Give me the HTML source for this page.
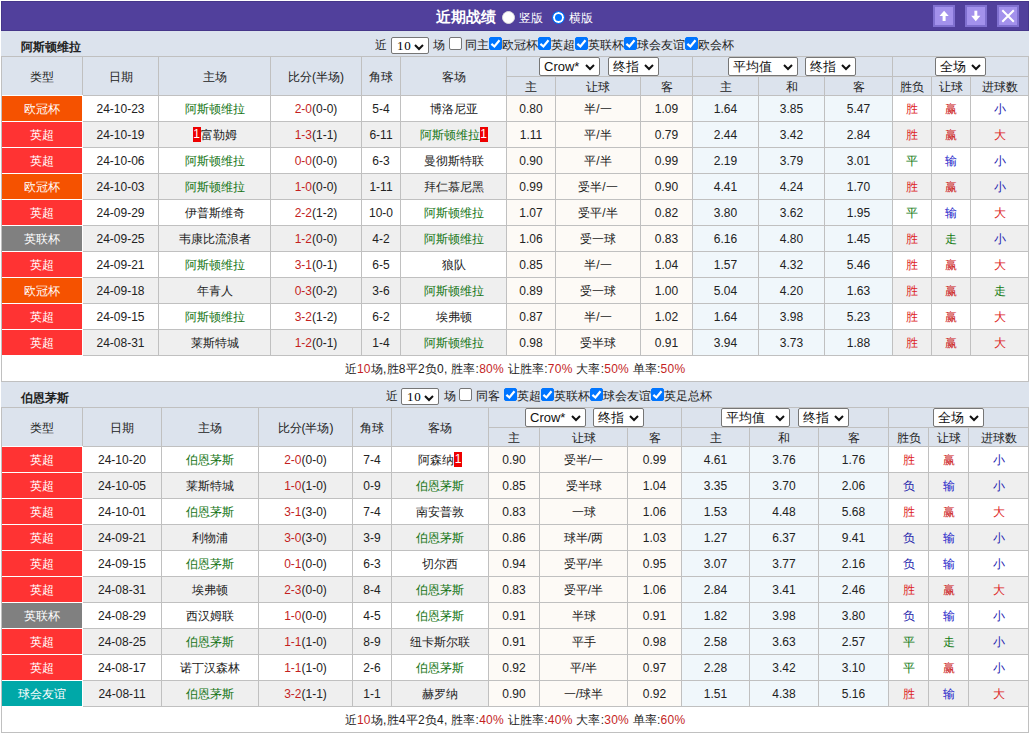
<!DOCTYPE html><html><head><meta charset="utf-8"><style>
html,body{margin:0;padding:0;background:#fff;}
body{width:1032px;height:734px;overflow:hidden;position:relative;font-family:"Liberation Sans",sans-serif;font-size:12px;color:#222;}
body div{position:absolute;box-sizing:border-box;white-space:nowrap;}
.title{font-weight:bold;font-size:12px;color:#222;}
.t{font-size:12px;line-height:18px;color:#222;}
.bt{font-size:15px;font-weight:bold;color:#fff;line-height:17px;}
.rc{display:inline-block;background:#e00;color:#fff;width:8px;height:15px;line-height:15px;text-align:center;vertical-align:middle;font-size:12px;position:relative;top:-1px;}
.sel{background:#fff;border:1px solid #767676;border-radius:2px;box-sizing:content-box !important;}
.sel .st{position:absolute;left:4px;top:0;font-size:13px;color:#111;}
.sel .st.mono{font-family:'Liberation Serif',serif;font-size:13px;letter-spacing:0.8px;left:5px;top:0px;color:#000;}
.sel .chev{position:absolute;right:4px;top:6px;}
.sel.m .chev{right:4px;}
.cb{width:13px;height:13px;border:1px solid #767676;border-radius:2px;background:#fff;}
.cb.on{background:#0075ff;border-color:#0075ff;}
.cb svg{position:absolute;left:-1px;top:-1px;}
.radio{width:13px;height:13px;border-radius:50%;background:#fff;border:1px solid #ddd;}
.radio.on{background:#0075ff;border:1px solid #0075ff;box-shadow:inset 0 0 0 2px #fff;}
.btn{width:22px;height:22px;background:#a391ec;border:2px solid #8070d0;}
</style></head><body><div style="left:1px;top:1px;width:1028px;height:30px;background:#51409c;box-sizing:border-box;border:1px solid #46378a"></div><div class="bt" style="left:436px;top:8px">近期战绩</div><div class="radio" style="left:502px;top:11px"></div><div class="t" style="left:519px;top:9px;color:#fff">竖版</div><div class="radio on" style="left:552px;top:11px"></div><div class="t" style="left:569px;top:9px;color:#fff">横版</div><div class="btn" style="left:933px;top:5px"><svg width="18" height="18" viewBox="0 0 18 18" style="position:absolute;left:0;top:0"><path d="M4.5 9 L9.1 3.8 L13.7 9 Z" fill="#fff"/><rect x="7.6" y="8.5" width="3" height="5.5" fill="#fff"/></svg></div><div class="btn" style="left:965px;top:5px"><svg width="18" height="18" viewBox="0 0 18 18" style="position:absolute;left:0;top:0"><path d="M4.2 8.7 L8.8 14.2 L13.4 8.7 Z" fill="#fff"/><rect x="7.4" y="3.7" width="2.9" height="5.5" fill="#fff"/></svg></div><div class="btn" style="left:997px;top:5px"><svg width="18" height="18" viewBox="0 0 18 18" style="position:absolute;left:0;top:0"><path d="M3.3 3.3 L14.8 14.8 M14.8 3.3 L3.3 14.8" stroke="#fff" stroke-width="2"/></svg></div><div style="left:1px;top:31px;width:1028px;height:25px;background:#dce3ed"></div><div class="title" style="left:21px;top:35px;height:25px;line-height:25px">阿斯顿维拉</div><div style="left:1px;top:56px;width:1028px;height:326px;background:#c0c0c0"></div><div style="left:2px;top:57px;width:80px;height:38px;background:#dce3ed;line-height:40px;text-align:center;">类型</div><div style="left:83px;top:57px;width:75px;height:38px;background:#dce3ed;line-height:40px;text-align:center;">日期</div><div style="left:159px;top:57px;width:111px;height:38px;background:#dce3ed;line-height:40px;text-align:center;">主场</div><div style="left:271px;top:57px;width:90px;height:38px;background:#dce3ed;line-height:40px;text-align:center;">比分(半场)</div><div style="left:362px;top:57px;width:38px;height:38px;background:#dce3ed;line-height:40px;text-align:center;">角球</div><div style="left:401px;top:57px;width:105px;height:38px;background:#dce3ed;line-height:40px;text-align:center;">客场</div><div style="left:507px;top:57px;width:185px;height:19px;background:#dce3ed;line-height:21px;"></div><div style="left:693px;top:57px;width:199px;height:19px;background:#dce3ed;line-height:21px;"></div><div style="left:893px;top:57px;width:135px;height:19px;background:#dce3ed;line-height:21px;"></div><div style="left:507px;top:77px;width:48px;height:18px;background:#dce3ed;line-height:20px;text-align:center;">主</div><div style="left:556px;top:77px;width:84px;height:18px;background:#dce3ed;line-height:20px;text-align:center;">让球</div><div style="left:641px;top:77px;width:51px;height:18px;background:#dce3ed;line-height:20px;text-align:center;">客</div><div style="left:693px;top:77px;width:65px;height:18px;background:#dce3ed;line-height:20px;text-align:center;">主</div><div style="left:759px;top:77px;width:65px;height:18px;background:#dce3ed;line-height:20px;text-align:center;">和</div><div style="left:825px;top:77px;width:67px;height:18px;background:#dce3ed;line-height:20px;text-align:center;">客</div><div style="left:893px;top:77px;width:38px;height:18px;background:#dce3ed;line-height:20px;text-align:center;">胜负</div><div style="left:932px;top:77px;width:38px;height:18px;background:#dce3ed;line-height:20px;text-align:center;">让球</div><div style="left:971px;top:77px;width:57px;height:18px;background:#dce3ed;line-height:20px;text-align:center;">进球数</div><div style="left:2px;top:95px;width:81px;height:261px;background:#fff"></div><div style="left:2px;top:96px;width:80px;height:25px;background:#f55200;line-height:27px;text-align:center;color:#fff;">欧冠杯</div><div style="left:83px;top:96px;width:75px;height:25px;background:#fff;line-height:27px;text-align:center;">24-10-23</div><div style="left:159px;top:96px;width:111px;height:25px;background:#fff;line-height:27px;text-align:center;"><span style="color:#157515">阿斯顿维拉</span></div><div style="left:271px;top:96px;width:90px;height:25px;background:#fff;line-height:27px;text-align:center;"><span style="color:#c41f1f">2-0</span>(0-0)</div><div style="left:362px;top:96px;width:38px;height:25px;background:#fff;line-height:27px;text-align:center;">5-4</div><div style="left:401px;top:96px;width:105px;height:25px;background:#fff;line-height:27px;text-align:center;"><span style="color:#222">博洛尼亚</span></div><div style="left:507px;top:96px;width:48px;height:25px;background:#fdfaf6;line-height:27px;text-align:center;">0.80</div><div style="left:556px;top:96px;width:84px;height:25px;background:#fdfaf6;line-height:27px;text-align:center;">半/一</div><div style="left:641px;top:96px;width:51px;height:25px;background:#fdfaf6;line-height:27px;text-align:center;">1.09</div><div style="left:693px;top:96px;width:65px;height:25px;background:#f0f7fb;line-height:27px;text-align:center;">1.64</div><div style="left:759px;top:96px;width:65px;height:25px;background:#f0f7fb;line-height:27px;text-align:center;">3.85</div><div style="left:825px;top:96px;width:67px;height:25px;background:#f0f7fb;line-height:27px;text-align:center;">5.47</div><div style="left:893px;top:96px;width:38px;height:25px;background:#fff;line-height:27px;text-align:center;"><span style="color:#dd2222">胜</span></div><div style="left:932px;top:96px;width:38px;height:25px;background:#fff;line-height:27px;text-align:center;"><span style="color:#cc2222">赢</span></div><div style="left:971px;top:96px;width:57px;height:25px;background:#fff;line-height:27px;text-align:center;"><span style="color:#2323b0">小</span></div><div style="left:2px;top:122px;width:80px;height:25px;background:#ff3333;line-height:27px;text-align:center;color:#fff;">英超</div><div style="left:83px;top:122px;width:75px;height:25px;background:#efefef;line-height:27px;text-align:center;">24-10-19</div><div style="left:159px;top:122px;width:111px;height:25px;background:#efefef;line-height:27px;text-align:center;"><span style="color:#222"><span class="rc">1</span>富勒姆</span></div><div style="left:271px;top:122px;width:90px;height:25px;background:#efefef;line-height:27px;text-align:center;"><span style="color:#c41f1f">1-3</span>(1-1)</div><div style="left:362px;top:122px;width:38px;height:25px;background:#efefef;line-height:27px;text-align:center;">6-11</div><div style="left:401px;top:122px;width:105px;height:25px;background:#efefef;line-height:27px;text-align:center;"><span style="color:#157515">阿斯顿维拉<span class="rc">1</span></span></div><div style="left:507px;top:122px;width:48px;height:25px;background:#fdfaf6;line-height:27px;text-align:center;">1.11</div><div style="left:556px;top:122px;width:84px;height:25px;background:#fdfaf6;line-height:27px;text-align:center;">平/半</div><div style="left:641px;top:122px;width:51px;height:25px;background:#fdfaf6;line-height:27px;text-align:center;">0.79</div><div style="left:693px;top:122px;width:65px;height:25px;background:#f0f7fb;line-height:27px;text-align:center;">2.44</div><div style="left:759px;top:122px;width:65px;height:25px;background:#f0f7fb;line-height:27px;text-align:center;">3.42</div><div style="left:825px;top:122px;width:67px;height:25px;background:#f0f7fb;line-height:27px;text-align:center;">2.84</div><div style="left:893px;top:122px;width:38px;height:25px;background:#efefef;line-height:27px;text-align:center;"><span style="color:#dd2222">胜</span></div><div style="left:932px;top:122px;width:38px;height:25px;background:#efefef;line-height:27px;text-align:center;"><span style="color:#cc2222">赢</span></div><div style="left:971px;top:122px;width:57px;height:25px;background:#efefef;line-height:27px;text-align:center;"><span style="color:#dd2222">大</span></div><div style="left:2px;top:148px;width:80px;height:25px;background:#ff3333;line-height:27px;text-align:center;color:#fff;">英超</div><div style="left:83px;top:148px;width:75px;height:25px;background:#fff;line-height:27px;text-align:center;">24-10-06</div><div style="left:159px;top:148px;width:111px;height:25px;background:#fff;line-height:27px;text-align:center;"><span style="color:#157515">阿斯顿维拉</span></div><div style="left:271px;top:148px;width:90px;height:25px;background:#fff;line-height:27px;text-align:center;"><span style="color:#c41f1f">0-0</span>(0-0)</div><div style="left:362px;top:148px;width:38px;height:25px;background:#fff;line-height:27px;text-align:center;">6-3</div><div style="left:401px;top:148px;width:105px;height:25px;background:#fff;line-height:27px;text-align:center;"><span style="color:#222">曼彻斯特联</span></div><div style="left:507px;top:148px;width:48px;height:25px;background:#fdfaf6;line-height:27px;text-align:center;">0.90</div><div style="left:556px;top:148px;width:84px;height:25px;background:#fdfaf6;line-height:27px;text-align:center;">平/半</div><div style="left:641px;top:148px;width:51px;height:25px;background:#fdfaf6;line-height:27px;text-align:center;">0.99</div><div style="left:693px;top:148px;width:65px;height:25px;background:#f0f7fb;line-height:27px;text-align:center;">2.19</div><div style="left:759px;top:148px;width:65px;height:25px;background:#f0f7fb;line-height:27px;text-align:center;">3.79</div><div style="left:825px;top:148px;width:67px;height:25px;background:#f0f7fb;line-height:27px;text-align:center;">3.01</div><div style="left:893px;top:148px;width:38px;height:25px;background:#fff;line-height:27px;text-align:center;"><span style="color:#117a11">平</span></div><div style="left:932px;top:148px;width:38px;height:25px;background:#fff;line-height:27px;text-align:center;"><span style="color:#1a1ac8">输</span></div><div style="left:971px;top:148px;width:57px;height:25px;background:#fff;line-height:27px;text-align:center;"><span style="color:#2323b0">小</span></div><div style="left:2px;top:174px;width:80px;height:25px;background:#f55200;line-height:27px;text-align:center;color:#fff;">欧冠杯</div><div style="left:83px;top:174px;width:75px;height:25px;background:#efefef;line-height:27px;text-align:center;">24-10-03</div><div style="left:159px;top:174px;width:111px;height:25px;background:#efefef;line-height:27px;text-align:center;"><span style="color:#157515">阿斯顿维拉</span></div><div style="left:271px;top:174px;width:90px;height:25px;background:#efefef;line-height:27px;text-align:center;"><span style="color:#c41f1f">1-0</span>(0-0)</div><div style="left:362px;top:174px;width:38px;height:25px;background:#efefef;line-height:27px;text-align:center;">1-11</div><div style="left:401px;top:174px;width:105px;height:25px;background:#efefef;line-height:27px;text-align:center;"><span style="color:#222">拜仁慕尼黑</span></div><div style="left:507px;top:174px;width:48px;height:25px;background:#fdfaf6;line-height:27px;text-align:center;">0.99</div><div style="left:556px;top:174px;width:84px;height:25px;background:#fdfaf6;line-height:27px;text-align:center;">受半/一</div><div style="left:641px;top:174px;width:51px;height:25px;background:#fdfaf6;line-height:27px;text-align:center;">0.90</div><div style="left:693px;top:174px;width:65px;height:25px;background:#f0f7fb;line-height:27px;text-align:center;">4.41</div><div style="left:759px;top:174px;width:65px;height:25px;background:#f0f7fb;line-height:27px;text-align:center;">4.24</div><div style="left:825px;top:174px;width:67px;height:25px;background:#f0f7fb;line-height:27px;text-align:center;">1.70</div><div style="left:893px;top:174px;width:38px;height:25px;background:#efefef;line-height:27px;text-align:center;"><span style="color:#dd2222">胜</span></div><div style="left:932px;top:174px;width:38px;height:25px;background:#efefef;line-height:27px;text-align:center;"><span style="color:#cc2222">赢</span></div><div style="left:971px;top:174px;width:57px;height:25px;background:#efefef;line-height:27px;text-align:center;"><span style="color:#2323b0">小</span></div><div style="left:2px;top:200px;width:80px;height:25px;background:#ff3333;line-height:27px;text-align:center;color:#fff;">英超</div><div style="left:83px;top:200px;width:75px;height:25px;background:#fff;line-height:27px;text-align:center;">24-09-29</div><div style="left:159px;top:200px;width:111px;height:25px;background:#fff;line-height:27px;text-align:center;"><span style="color:#222">伊普斯维奇</span></div><div style="left:271px;top:200px;width:90px;height:25px;background:#fff;line-height:27px;text-align:center;"><span style="color:#c41f1f">2-2</span>(1-2)</div><div style="left:362px;top:200px;width:38px;height:25px;background:#fff;line-height:27px;text-align:center;">10-0</div><div style="left:401px;top:200px;width:105px;height:25px;background:#fff;line-height:27px;text-align:center;"><span style="color:#157515">阿斯顿维拉</span></div><div style="left:507px;top:200px;width:48px;height:25px;background:#fdfaf6;line-height:27px;text-align:center;">1.07</div><div style="left:556px;top:200px;width:84px;height:25px;background:#fdfaf6;line-height:27px;text-align:center;">受平/半</div><div style="left:641px;top:200px;width:51px;height:25px;background:#fdfaf6;line-height:27px;text-align:center;">0.82</div><div style="left:693px;top:200px;width:65px;height:25px;background:#f0f7fb;line-height:27px;text-align:center;">3.80</div><div style="left:759px;top:200px;width:65px;height:25px;background:#f0f7fb;line-height:27px;text-align:center;">3.62</div><div style="left:825px;top:200px;width:67px;height:25px;background:#f0f7fb;line-height:27px;text-align:center;">1.95</div><div style="left:893px;top:200px;width:38px;height:25px;background:#fff;line-height:27px;text-align:center;"><span style="color:#117a11">平</span></div><div style="left:932px;top:200px;width:38px;height:25px;background:#fff;line-height:27px;text-align:center;"><span style="color:#1a1ac8">输</span></div><div style="left:971px;top:200px;width:57px;height:25px;background:#fff;line-height:27px;text-align:center;"><span style="color:#dd2222">大</span></div><div style="left:2px;top:226px;width:80px;height:25px;background:#808080;line-height:27px;text-align:center;color:#fff;">英联杯</div><div style="left:83px;top:226px;width:75px;height:25px;background:#efefef;line-height:27px;text-align:center;">24-09-25</div><div style="left:159px;top:226px;width:111px;height:25px;background:#efefef;line-height:27px;text-align:center;"><span style="color:#222">韦康比流浪者</span></div><div style="left:271px;top:226px;width:90px;height:25px;background:#efefef;line-height:27px;text-align:center;"><span style="color:#c41f1f">1-2</span>(0-0)</div><div style="left:362px;top:226px;width:38px;height:25px;background:#efefef;line-height:27px;text-align:center;">4-2</div><div style="left:401px;top:226px;width:105px;height:25px;background:#efefef;line-height:27px;text-align:center;"><span style="color:#157515">阿斯顿维拉</span></div><div style="left:507px;top:226px;width:48px;height:25px;background:#fdfaf6;line-height:27px;text-align:center;">1.06</div><div style="left:556px;top:226px;width:84px;height:25px;background:#fdfaf6;line-height:27px;text-align:center;">受一球</div><div style="left:641px;top:226px;width:51px;height:25px;background:#fdfaf6;line-height:27px;text-align:center;">0.83</div><div style="left:693px;top:226px;width:65px;height:25px;background:#f0f7fb;line-height:27px;text-align:center;">6.16</div><div style="left:759px;top:226px;width:65px;height:25px;background:#f0f7fb;line-height:27px;text-align:center;">4.80</div><div style="left:825px;top:226px;width:67px;height:25px;background:#f0f7fb;line-height:27px;text-align:center;">1.45</div><div style="left:893px;top:226px;width:38px;height:25px;background:#efefef;line-height:27px;text-align:center;"><span style="color:#dd2222">胜</span></div><div style="left:932px;top:226px;width:38px;height:25px;background:#efefef;line-height:27px;text-align:center;"><span style="color:#117a11">走</span></div><div style="left:971px;top:226px;width:57px;height:25px;background:#efefef;line-height:27px;text-align:center;"><span style="color:#2323b0">小</span></div><div style="left:2px;top:252px;width:80px;height:25px;background:#ff3333;line-height:27px;text-align:center;color:#fff;">英超</div><div style="left:83px;top:252px;width:75px;height:25px;background:#fff;line-height:27px;text-align:center;">24-09-21</div><div style="left:159px;top:252px;width:111px;height:25px;background:#fff;line-height:27px;text-align:center;"><span style="color:#157515">阿斯顿维拉</span></div><div style="left:271px;top:252px;width:90px;height:25px;background:#fff;line-height:27px;text-align:center;"><span style="color:#c41f1f">3-1</span>(0-1)</div><div style="left:362px;top:252px;width:38px;height:25px;background:#fff;line-height:27px;text-align:center;">6-5</div><div style="left:401px;top:252px;width:105px;height:25px;background:#fff;line-height:27px;text-align:center;"><span style="color:#222">狼队</span></div><div style="left:507px;top:252px;width:48px;height:25px;background:#fdfaf6;line-height:27px;text-align:center;">0.85</div><div style="left:556px;top:252px;width:84px;height:25px;background:#fdfaf6;line-height:27px;text-align:center;">半/一</div><div style="left:641px;top:252px;width:51px;height:25px;background:#fdfaf6;line-height:27px;text-align:center;">1.04</div><div style="left:693px;top:252px;width:65px;height:25px;background:#f0f7fb;line-height:27px;text-align:center;">1.57</div><div style="left:759px;top:252px;width:65px;height:25px;background:#f0f7fb;line-height:27px;text-align:center;">4.32</div><div style="left:825px;top:252px;width:67px;height:25px;background:#f0f7fb;line-height:27px;text-align:center;">5.46</div><div style="left:893px;top:252px;width:38px;height:25px;background:#fff;line-height:27px;text-align:center;"><span style="color:#dd2222">胜</span></div><div style="left:932px;top:252px;width:38px;height:25px;background:#fff;line-height:27px;text-align:center;"><span style="color:#cc2222">赢</span></div><div style="left:971px;top:252px;width:57px;height:25px;background:#fff;line-height:27px;text-align:center;"><span style="color:#dd2222">大</span></div><div style="left:2px;top:278px;width:80px;height:25px;background:#f55200;line-height:27px;text-align:center;color:#fff;">欧冠杯</div><div style="left:83px;top:278px;width:75px;height:25px;background:#efefef;line-height:27px;text-align:center;">24-09-18</div><div style="left:159px;top:278px;width:111px;height:25px;background:#efefef;line-height:27px;text-align:center;"><span style="color:#222">年青人</span></div><div style="left:271px;top:278px;width:90px;height:25px;background:#efefef;line-height:27px;text-align:center;"><span style="color:#c41f1f">0-3</span>(0-2)</div><div style="left:362px;top:278px;width:38px;height:25px;background:#efefef;line-height:27px;text-align:center;">3-6</div><div style="left:401px;top:278px;width:105px;height:25px;background:#efefef;line-height:27px;text-align:center;"><span style="color:#157515">阿斯顿维拉</span></div><div style="left:507px;top:278px;width:48px;height:25px;background:#fdfaf6;line-height:27px;text-align:center;">0.89</div><div style="left:556px;top:278px;width:84px;height:25px;background:#fdfaf6;line-height:27px;text-align:center;">受一球</div><div style="left:641px;top:278px;width:51px;height:25px;background:#fdfaf6;line-height:27px;text-align:center;">1.00</div><div style="left:693px;top:278px;width:65px;height:25px;background:#f0f7fb;line-height:27px;text-align:center;">5.04</div><div style="left:759px;top:278px;width:65px;height:25px;background:#f0f7fb;line-height:27px;text-align:center;">4.20</div><div style="left:825px;top:278px;width:67px;height:25px;background:#f0f7fb;line-height:27px;text-align:center;">1.63</div><div style="left:893px;top:278px;width:38px;height:25px;background:#efefef;line-height:27px;text-align:center;"><span style="color:#dd2222">胜</span></div><div style="left:932px;top:278px;width:38px;height:25px;background:#efefef;line-height:27px;text-align:center;"><span style="color:#cc2222">赢</span></div><div style="left:971px;top:278px;width:57px;height:25px;background:#efefef;line-height:27px;text-align:center;"><span style="color:#117a11">走</span></div><div style="left:2px;top:304px;width:80px;height:25px;background:#ff3333;line-height:27px;text-align:center;color:#fff;">英超</div><div style="left:83px;top:304px;width:75px;height:25px;background:#fff;line-height:27px;text-align:center;">24-09-15</div><div style="left:159px;top:304px;width:111px;height:25px;background:#fff;line-height:27px;text-align:center;"><span style="color:#157515">阿斯顿维拉</span></div><div style="left:271px;top:304px;width:90px;height:25px;background:#fff;line-height:27px;text-align:center;"><span style="color:#c41f1f">3-2</span>(1-2)</div><div style="left:362px;top:304px;width:38px;height:25px;background:#fff;line-height:27px;text-align:center;">6-2</div><div style="left:401px;top:304px;width:105px;height:25px;background:#fff;line-height:27px;text-align:center;"><span style="color:#222">埃弗顿</span></div><div style="left:507px;top:304px;width:48px;height:25px;background:#fdfaf6;line-height:27px;text-align:center;">0.87</div><div style="left:556px;top:304px;width:84px;height:25px;background:#fdfaf6;line-height:27px;text-align:center;">半/一</div><div style="left:641px;top:304px;width:51px;height:25px;background:#fdfaf6;line-height:27px;text-align:center;">1.02</div><div style="left:693px;top:304px;width:65px;height:25px;background:#f0f7fb;line-height:27px;text-align:center;">1.64</div><div style="left:759px;top:304px;width:65px;height:25px;background:#f0f7fb;line-height:27px;text-align:center;">3.98</div><div style="left:825px;top:304px;width:67px;height:25px;background:#f0f7fb;line-height:27px;text-align:center;">5.23</div><div style="left:893px;top:304px;width:38px;height:25px;background:#fff;line-height:27px;text-align:center;"><span style="color:#dd2222">胜</span></div><div style="left:932px;top:304px;width:38px;height:25px;background:#fff;line-height:27px;text-align:center;"><span style="color:#cc2222">赢</span></div><div style="left:971px;top:304px;width:57px;height:25px;background:#fff;line-height:27px;text-align:center;"><span style="color:#dd2222">大</span></div><div style="left:2px;top:330px;width:80px;height:25px;background:#ff3333;line-height:27px;text-align:center;color:#fff;">英超</div><div style="left:83px;top:330px;width:75px;height:25px;background:#efefef;line-height:27px;text-align:center;">24-08-31</div><div style="left:159px;top:330px;width:111px;height:25px;background:#efefef;line-height:27px;text-align:center;"><span style="color:#222">莱斯特城</span></div><div style="left:271px;top:330px;width:90px;height:25px;background:#efefef;line-height:27px;text-align:center;"><span style="color:#c41f1f">1-2</span>(0-1)</div><div style="left:362px;top:330px;width:38px;height:25px;background:#efefef;line-height:27px;text-align:center;">1-4</div><div style="left:401px;top:330px;width:105px;height:25px;background:#efefef;line-height:27px;text-align:center;"><span style="color:#157515">阿斯顿维拉</span></div><div style="left:507px;top:330px;width:48px;height:25px;background:#fdfaf6;line-height:27px;text-align:center;">0.98</div><div style="left:556px;top:330px;width:84px;height:25px;background:#fdfaf6;line-height:27px;text-align:center;">受半球</div><div style="left:641px;top:330px;width:51px;height:25px;background:#fdfaf6;line-height:27px;text-align:center;">0.91</div><div style="left:693px;top:330px;width:65px;height:25px;background:#f0f7fb;line-height:27px;text-align:center;">3.94</div><div style="left:759px;top:330px;width:65px;height:25px;background:#f0f7fb;line-height:27px;text-align:center;">3.73</div><div style="left:825px;top:330px;width:67px;height:25px;background:#f0f7fb;line-height:27px;text-align:center;">1.88</div><div style="left:893px;top:330px;width:38px;height:25px;background:#efefef;line-height:27px;text-align:center;"><span style="color:#dd2222">胜</span></div><div style="left:932px;top:330px;width:38px;height:25px;background:#efefef;line-height:27px;text-align:center;"><span style="color:#cc2222">赢</span></div><div style="left:971px;top:330px;width:57px;height:25px;background:#efefef;line-height:27px;text-align:center;"><span style="color:#dd2222">大</span></div><div style="left:2px;top:356px;width:1026px;height:25px;background:#fff;line-height:27px;text-align:center;letter-spacing:0.24px;">近<span style="color:#c41f1f">10</span>场,胜8平2负0, 胜率:<span style="color:#c41f1f">80%</span> 让胜率:<span style="color:#c41f1f">70%</span> 大率:<span style="color:#c41f1f">50%</span> 单率:<span style="color:#c41f1f">50%</span></div><div class="t" style="left:375px;top:36px;">近</div><div class="sel m" style="left:391px;top:37px;width:36px;height:15px;line-height:15px"><span class="st mono">10</span><svg class="chev" width="10" height="7" viewBox="0 0 10 7"><path d="M1 1 L5 5 L9 1" fill="none" stroke="#111" stroke-width="2"/></svg></div><div class="t" style="left:433px;top:36px;">场</div><div class="cb" style="left:449px;top:37px"></div><div class="t" style="left:465px;top:36px;">同主</div><div class="cb on" style="left:489px;top:37px"><svg width="13" height="13" viewBox="0 0 13 13"><path d="M2.4 6.9 L5.4 9.5 L10.5 3.2" fill="none" stroke="#fff" stroke-width="2.2"/></svg></div><div class="t" style="left:502px;top:36px;">欧冠杯</div><div class="cb on" style="left:538px;top:37px"><svg width="13" height="13" viewBox="0 0 13 13"><path d="M2.4 6.9 L5.4 9.5 L10.5 3.2" fill="none" stroke="#fff" stroke-width="2.2"/></svg></div><div class="t" style="left:551px;top:36px;">英超</div><div class="cb on" style="left:575px;top:37px"><svg width="13" height="13" viewBox="0 0 13 13"><path d="M2.4 6.9 L5.4 9.5 L10.5 3.2" fill="none" stroke="#fff" stroke-width="2.2"/></svg></div><div class="t" style="left:588px;top:36px;">英联杯</div><div class="cb on" style="left:624px;top:37px"><svg width="13" height="13" viewBox="0 0 13 13"><path d="M2.4 6.9 L5.4 9.5 L10.5 3.2" fill="none" stroke="#fff" stroke-width="2.2"/></svg></div><div class="t" style="left:637px;top:36px;">球会友谊</div><div class="cb on" style="left:685px;top:37px"><svg width="13" height="13" viewBox="0 0 13 13"><path d="M2.4 6.9 L5.4 9.5 L10.5 3.2" fill="none" stroke="#fff" stroke-width="2.2"/></svg></div><div class="t" style="left:698px;top:36px;">欧会杯</div><div class="sel" style="left:539px;top:57px;width:59px;height:17px;line-height:17px"><span class="st">Crow*</span><svg class="chev" width="10" height="7" viewBox="0 0 10 7"><path d="M1 1 L5 5 L9 1" fill="none" stroke="#111" stroke-width="2"/></svg></div><div class="sel" style="left:608px;top:57px;width:49px;height:17px;line-height:17px"><span class="st">终指</span><svg class="chev" width="10" height="7" viewBox="0 0 10 7"><path d="M1 1 L5 5 L9 1" fill="none" stroke="#111" stroke-width="2"/></svg></div><div class="sel" style="left:728px;top:57px;width:68px;height:17px;line-height:17px"><span class="st">平均值</span><svg class="chev" width="10" height="7" viewBox="0 0 10 7"><path d="M1 1 L5 5 L9 1" fill="none" stroke="#111" stroke-width="2"/></svg></div><div class="sel" style="left:805px;top:57px;width:49px;height:17px;line-height:17px"><span class="st">终指</span><svg class="chev" width="10" height="7" viewBox="0 0 10 7"><path d="M1 1 L5 5 L9 1" fill="none" stroke="#111" stroke-width="2"/></svg></div><div class="sel" style="left:935px;top:57px;width:49px;height:17px;line-height:17px"><span class="st">全场</span><svg class="chev" width="10" height="7" viewBox="0 0 10 7"><path d="M1 1 L5 5 L9 1" fill="none" stroke="#111" stroke-width="2"/></svg></div><div style="left:1px;top:382px;width:1028px;height:25px;background:#dce3ed"></div><div class="title" style="left:21px;top:386px;height:25px;line-height:25px">伯恩茅斯</div><div style="left:1px;top:407px;width:1028px;height:326px;background:#c0c0c0"></div><div style="left:2px;top:408px;width:80px;height:38px;background:#dce3ed;line-height:40px;text-align:center;">类型</div><div style="left:83px;top:408px;width:78px;height:38px;background:#dce3ed;line-height:40px;text-align:center;">日期</div><div style="left:162px;top:408px;width:96px;height:38px;background:#dce3ed;line-height:40px;text-align:center;">主场</div><div style="left:259px;top:408px;width:93px;height:38px;background:#dce3ed;line-height:40px;text-align:center;">比分(半场)</div><div style="left:353px;top:408px;width:38px;height:38px;background:#dce3ed;line-height:40px;text-align:center;">角球</div><div style="left:392px;top:408px;width:96px;height:38px;background:#dce3ed;line-height:40px;text-align:center;">客场</div><div style="left:489px;top:408px;width:192px;height:19px;background:#dce3ed;line-height:21px;"></div><div style="left:682px;top:408px;width:206px;height:19px;background:#dce3ed;line-height:21px;"></div><div style="left:889px;top:408px;width:139px;height:19px;background:#dce3ed;line-height:21px;"></div><div style="left:489px;top:428px;width:50px;height:18px;background:#dce3ed;line-height:20px;text-align:center;">主</div><div style="left:540px;top:428px;width:87px;height:18px;background:#dce3ed;line-height:20px;text-align:center;">让球</div><div style="left:628px;top:428px;width:53px;height:18px;background:#dce3ed;line-height:20px;text-align:center;">客</div><div style="left:682px;top:428px;width:67px;height:18px;background:#dce3ed;line-height:20px;text-align:center;">主</div><div style="left:750px;top:428px;width:68px;height:18px;background:#dce3ed;line-height:20px;text-align:center;">和</div><div style="left:819px;top:428px;width:69px;height:18px;background:#dce3ed;line-height:20px;text-align:center;">客</div><div style="left:889px;top:428px;width:39px;height:18px;background:#dce3ed;line-height:20px;text-align:center;">胜负</div><div style="left:929px;top:428px;width:39px;height:18px;background:#dce3ed;line-height:20px;text-align:center;">让球</div><div style="left:969px;top:428px;width:59px;height:18px;background:#dce3ed;line-height:20px;text-align:center;">进球数</div><div style="left:2px;top:446px;width:81px;height:261px;background:#fff"></div><div style="left:2px;top:447px;width:80px;height:25px;background:#ff3333;line-height:27px;text-align:center;color:#fff;">英超</div><div style="left:83px;top:447px;width:78px;height:25px;background:#fff;line-height:27px;text-align:center;">24-10-20</div><div style="left:162px;top:447px;width:96px;height:25px;background:#fff;line-height:27px;text-align:center;"><span style="color:#157515">伯恩茅斯</span></div><div style="left:259px;top:447px;width:93px;height:25px;background:#fff;line-height:27px;text-align:center;"><span style="color:#c41f1f">2-0</span>(0-0)</div><div style="left:353px;top:447px;width:38px;height:25px;background:#fff;line-height:27px;text-align:center;">7-4</div><div style="left:392px;top:447px;width:96px;height:25px;background:#fff;line-height:27px;text-align:center;"><span style="color:#222">阿森纳<span class="rc">1</span></span></div><div style="left:489px;top:447px;width:50px;height:25px;background:#fdfaf6;line-height:27px;text-align:center;">0.90</div><div style="left:540px;top:447px;width:87px;height:25px;background:#fdfaf6;line-height:27px;text-align:center;">受半/一</div><div style="left:628px;top:447px;width:53px;height:25px;background:#fdfaf6;line-height:27px;text-align:center;">0.99</div><div style="left:682px;top:447px;width:67px;height:25px;background:#f0f7fb;line-height:27px;text-align:center;">4.61</div><div style="left:750px;top:447px;width:68px;height:25px;background:#f0f7fb;line-height:27px;text-align:center;">3.76</div><div style="left:819px;top:447px;width:69px;height:25px;background:#f0f7fb;line-height:27px;text-align:center;">1.76</div><div style="left:889px;top:447px;width:39px;height:25px;background:#fff;line-height:27px;text-align:center;"><span style="color:#dd2222">胜</span></div><div style="left:929px;top:447px;width:39px;height:25px;background:#fff;line-height:27px;text-align:center;"><span style="color:#cc2222">赢</span></div><div style="left:969px;top:447px;width:59px;height:25px;background:#fff;line-height:27px;text-align:center;"><span style="color:#2323b0">小</span></div><div style="left:2px;top:473px;width:80px;height:25px;background:#ff3333;line-height:27px;text-align:center;color:#fff;">英超</div><div style="left:83px;top:473px;width:78px;height:25px;background:#efefef;line-height:27px;text-align:center;">24-10-05</div><div style="left:162px;top:473px;width:96px;height:25px;background:#efefef;line-height:27px;text-align:center;"><span style="color:#222">莱斯特城</span></div><div style="left:259px;top:473px;width:93px;height:25px;background:#efefef;line-height:27px;text-align:center;"><span style="color:#c41f1f">1-0</span>(1-0)</div><div style="left:353px;top:473px;width:38px;height:25px;background:#efefef;line-height:27px;text-align:center;">0-9</div><div style="left:392px;top:473px;width:96px;height:25px;background:#efefef;line-height:27px;text-align:center;"><span style="color:#157515">伯恩茅斯</span></div><div style="left:489px;top:473px;width:50px;height:25px;background:#fdfaf6;line-height:27px;text-align:center;">0.85</div><div style="left:540px;top:473px;width:87px;height:25px;background:#fdfaf6;line-height:27px;text-align:center;">受半球</div><div style="left:628px;top:473px;width:53px;height:25px;background:#fdfaf6;line-height:27px;text-align:center;">1.04</div><div style="left:682px;top:473px;width:67px;height:25px;background:#f0f7fb;line-height:27px;text-align:center;">3.35</div><div style="left:750px;top:473px;width:68px;height:25px;background:#f0f7fb;line-height:27px;text-align:center;">3.70</div><div style="left:819px;top:473px;width:69px;height:25px;background:#f0f7fb;line-height:27px;text-align:center;">2.06</div><div style="left:889px;top:473px;width:39px;height:25px;background:#efefef;line-height:27px;text-align:center;"><span style="color:#1c1cab">负</span></div><div style="left:929px;top:473px;width:39px;height:25px;background:#efefef;line-height:27px;text-align:center;"><span style="color:#1a1ac8">输</span></div><div style="left:969px;top:473px;width:59px;height:25px;background:#efefef;line-height:27px;text-align:center;"><span style="color:#2323b0">小</span></div><div style="left:2px;top:499px;width:80px;height:25px;background:#ff3333;line-height:27px;text-align:center;color:#fff;">英超</div><div style="left:83px;top:499px;width:78px;height:25px;background:#fff;line-height:27px;text-align:center;">24-10-01</div><div style="left:162px;top:499px;width:96px;height:25px;background:#fff;line-height:27px;text-align:center;"><span style="color:#157515">伯恩茅斯</span></div><div style="left:259px;top:499px;width:93px;height:25px;background:#fff;line-height:27px;text-align:center;"><span style="color:#c41f1f">3-1</span>(3-0)</div><div style="left:353px;top:499px;width:38px;height:25px;background:#fff;line-height:27px;text-align:center;">7-4</div><div style="left:392px;top:499px;width:96px;height:25px;background:#fff;line-height:27px;text-align:center;"><span style="color:#222">南安普敦</span></div><div style="left:489px;top:499px;width:50px;height:25px;background:#fdfaf6;line-height:27px;text-align:center;">0.83</div><div style="left:540px;top:499px;width:87px;height:25px;background:#fdfaf6;line-height:27px;text-align:center;">一球</div><div style="left:628px;top:499px;width:53px;height:25px;background:#fdfaf6;line-height:27px;text-align:center;">1.06</div><div style="left:682px;top:499px;width:67px;height:25px;background:#f0f7fb;line-height:27px;text-align:center;">1.53</div><div style="left:750px;top:499px;width:68px;height:25px;background:#f0f7fb;line-height:27px;text-align:center;">4.48</div><div style="left:819px;top:499px;width:69px;height:25px;background:#f0f7fb;line-height:27px;text-align:center;">5.68</div><div style="left:889px;top:499px;width:39px;height:25px;background:#fff;line-height:27px;text-align:center;"><span style="color:#dd2222">胜</span></div><div style="left:929px;top:499px;width:39px;height:25px;background:#fff;line-height:27px;text-align:center;"><span style="color:#cc2222">赢</span></div><div style="left:969px;top:499px;width:59px;height:25px;background:#fff;line-height:27px;text-align:center;"><span style="color:#dd2222">大</span></div><div style="left:2px;top:525px;width:80px;height:25px;background:#ff3333;line-height:27px;text-align:center;color:#fff;">英超</div><div style="left:83px;top:525px;width:78px;height:25px;background:#efefef;line-height:27px;text-align:center;">24-09-21</div><div style="left:162px;top:525px;width:96px;height:25px;background:#efefef;line-height:27px;text-align:center;"><span style="color:#222">利物浦</span></div><div style="left:259px;top:525px;width:93px;height:25px;background:#efefef;line-height:27px;text-align:center;"><span style="color:#c41f1f">3-0</span>(3-0)</div><div style="left:353px;top:525px;width:38px;height:25px;background:#efefef;line-height:27px;text-align:center;">3-9</div><div style="left:392px;top:525px;width:96px;height:25px;background:#efefef;line-height:27px;text-align:center;"><span style="color:#157515">伯恩茅斯</span></div><div style="left:489px;top:525px;width:50px;height:25px;background:#fdfaf6;line-height:27px;text-align:center;">0.86</div><div style="left:540px;top:525px;width:87px;height:25px;background:#fdfaf6;line-height:27px;text-align:center;">球半/两</div><div style="left:628px;top:525px;width:53px;height:25px;background:#fdfaf6;line-height:27px;text-align:center;">1.03</div><div style="left:682px;top:525px;width:67px;height:25px;background:#f0f7fb;line-height:27px;text-align:center;">1.27</div><div style="left:750px;top:525px;width:68px;height:25px;background:#f0f7fb;line-height:27px;text-align:center;">6.37</div><div style="left:819px;top:525px;width:69px;height:25px;background:#f0f7fb;line-height:27px;text-align:center;">9.41</div><div style="left:889px;top:525px;width:39px;height:25px;background:#efefef;line-height:27px;text-align:center;"><span style="color:#1c1cab">负</span></div><div style="left:929px;top:525px;width:39px;height:25px;background:#efefef;line-height:27px;text-align:center;"><span style="color:#1a1ac8">输</span></div><div style="left:969px;top:525px;width:59px;height:25px;background:#efefef;line-height:27px;text-align:center;"><span style="color:#2323b0">小</span></div><div style="left:2px;top:551px;width:80px;height:25px;background:#ff3333;line-height:27px;text-align:center;color:#fff;">英超</div><div style="left:83px;top:551px;width:78px;height:25px;background:#fff;line-height:27px;text-align:center;">24-09-15</div><div style="left:162px;top:551px;width:96px;height:25px;background:#fff;line-height:27px;text-align:center;"><span style="color:#157515">伯恩茅斯</span></div><div style="left:259px;top:551px;width:93px;height:25px;background:#fff;line-height:27px;text-align:center;"><span style="color:#c41f1f">0-1</span>(0-0)</div><div style="left:353px;top:551px;width:38px;height:25px;background:#fff;line-height:27px;text-align:center;">6-3</div><div style="left:392px;top:551px;width:96px;height:25px;background:#fff;line-height:27px;text-align:center;"><span style="color:#222">切尔西</span></div><div style="left:489px;top:551px;width:50px;height:25px;background:#fdfaf6;line-height:27px;text-align:center;">0.94</div><div style="left:540px;top:551px;width:87px;height:25px;background:#fdfaf6;line-height:27px;text-align:center;">受平/半</div><div style="left:628px;top:551px;width:53px;height:25px;background:#fdfaf6;line-height:27px;text-align:center;">0.95</div><div style="left:682px;top:551px;width:67px;height:25px;background:#f0f7fb;line-height:27px;text-align:center;">3.07</div><div style="left:750px;top:551px;width:68px;height:25px;background:#f0f7fb;line-height:27px;text-align:center;">3.77</div><div style="left:819px;top:551px;width:69px;height:25px;background:#f0f7fb;line-height:27px;text-align:center;">2.16</div><div style="left:889px;top:551px;width:39px;height:25px;background:#fff;line-height:27px;text-align:center;"><span style="color:#1c1cab">负</span></div><div style="left:929px;top:551px;width:39px;height:25px;background:#fff;line-height:27px;text-align:center;"><span style="color:#1a1ac8">输</span></div><div style="left:969px;top:551px;width:59px;height:25px;background:#fff;line-height:27px;text-align:center;"><span style="color:#2323b0">小</span></div><div style="left:2px;top:577px;width:80px;height:25px;background:#ff3333;line-height:27px;text-align:center;color:#fff;">英超</div><div style="left:83px;top:577px;width:78px;height:25px;background:#efefef;line-height:27px;text-align:center;">24-08-31</div><div style="left:162px;top:577px;width:96px;height:25px;background:#efefef;line-height:27px;text-align:center;"><span style="color:#222">埃弗顿</span></div><div style="left:259px;top:577px;width:93px;height:25px;background:#efefef;line-height:27px;text-align:center;"><span style="color:#c41f1f">2-3</span>(0-0)</div><div style="left:353px;top:577px;width:38px;height:25px;background:#efefef;line-height:27px;text-align:center;">8-4</div><div style="left:392px;top:577px;width:96px;height:25px;background:#efefef;line-height:27px;text-align:center;"><span style="color:#157515">伯恩茅斯</span></div><div style="left:489px;top:577px;width:50px;height:25px;background:#fdfaf6;line-height:27px;text-align:center;">0.83</div><div style="left:540px;top:577px;width:87px;height:25px;background:#fdfaf6;line-height:27px;text-align:center;">受平/半</div><div style="left:628px;top:577px;width:53px;height:25px;background:#fdfaf6;line-height:27px;text-align:center;">1.06</div><div style="left:682px;top:577px;width:67px;height:25px;background:#f0f7fb;line-height:27px;text-align:center;">2.84</div><div style="left:750px;top:577px;width:68px;height:25px;background:#f0f7fb;line-height:27px;text-align:center;">3.41</div><div style="left:819px;top:577px;width:69px;height:25px;background:#f0f7fb;line-height:27px;text-align:center;">2.46</div><div style="left:889px;top:577px;width:39px;height:25px;background:#efefef;line-height:27px;text-align:center;"><span style="color:#dd2222">胜</span></div><div style="left:929px;top:577px;width:39px;height:25px;background:#efefef;line-height:27px;text-align:center;"><span style="color:#cc2222">赢</span></div><div style="left:969px;top:577px;width:59px;height:25px;background:#efefef;line-height:27px;text-align:center;"><span style="color:#dd2222">大</span></div><div style="left:2px;top:603px;width:80px;height:25px;background:#808080;line-height:27px;text-align:center;color:#fff;">英联杯</div><div style="left:83px;top:603px;width:78px;height:25px;background:#fff;line-height:27px;text-align:center;">24-08-29</div><div style="left:162px;top:603px;width:96px;height:25px;background:#fff;line-height:27px;text-align:center;"><span style="color:#222">西汉姆联</span></div><div style="left:259px;top:603px;width:93px;height:25px;background:#fff;line-height:27px;text-align:center;"><span style="color:#c41f1f">1-0</span>(0-0)</div><div style="left:353px;top:603px;width:38px;height:25px;background:#fff;line-height:27px;text-align:center;">4-5</div><div style="left:392px;top:603px;width:96px;height:25px;background:#fff;line-height:27px;text-align:center;"><span style="color:#157515">伯恩茅斯</span></div><div style="left:489px;top:603px;width:50px;height:25px;background:#fdfaf6;line-height:27px;text-align:center;">0.91</div><div style="left:540px;top:603px;width:87px;height:25px;background:#fdfaf6;line-height:27px;text-align:center;">半球</div><div style="left:628px;top:603px;width:53px;height:25px;background:#fdfaf6;line-height:27px;text-align:center;">0.91</div><div style="left:682px;top:603px;width:67px;height:25px;background:#f0f7fb;line-height:27px;text-align:center;">1.82</div><div style="left:750px;top:603px;width:68px;height:25px;background:#f0f7fb;line-height:27px;text-align:center;">3.98</div><div style="left:819px;top:603px;width:69px;height:25px;background:#f0f7fb;line-height:27px;text-align:center;">3.80</div><div style="left:889px;top:603px;width:39px;height:25px;background:#fff;line-height:27px;text-align:center;"><span style="color:#1c1cab">负</span></div><div style="left:929px;top:603px;width:39px;height:25px;background:#fff;line-height:27px;text-align:center;"><span style="color:#1a1ac8">输</span></div><div style="left:969px;top:603px;width:59px;height:25px;background:#fff;line-height:27px;text-align:center;"><span style="color:#2323b0">小</span></div><div style="left:2px;top:629px;width:80px;height:25px;background:#ff3333;line-height:27px;text-align:center;color:#fff;">英超</div><div style="left:83px;top:629px;width:78px;height:25px;background:#efefef;line-height:27px;text-align:center;">24-08-25</div><div style="left:162px;top:629px;width:96px;height:25px;background:#efefef;line-height:27px;text-align:center;"><span style="color:#157515">伯恩茅斯</span></div><div style="left:259px;top:629px;width:93px;height:25px;background:#efefef;line-height:27px;text-align:center;"><span style="color:#c41f1f">1-1</span>(1-0)</div><div style="left:353px;top:629px;width:38px;height:25px;background:#efefef;line-height:27px;text-align:center;">8-9</div><div style="left:392px;top:629px;width:96px;height:25px;background:#efefef;line-height:27px;text-align:center;"><span style="color:#222">纽卡斯尔联</span></div><div style="left:489px;top:629px;width:50px;height:25px;background:#fdfaf6;line-height:27px;text-align:center;">0.91</div><div style="left:540px;top:629px;width:87px;height:25px;background:#fdfaf6;line-height:27px;text-align:center;">平手</div><div style="left:628px;top:629px;width:53px;height:25px;background:#fdfaf6;line-height:27px;text-align:center;">0.98</div><div style="left:682px;top:629px;width:67px;height:25px;background:#f0f7fb;line-height:27px;text-align:center;">2.58</div><div style="left:750px;top:629px;width:68px;height:25px;background:#f0f7fb;line-height:27px;text-align:center;">3.63</div><div style="left:819px;top:629px;width:69px;height:25px;background:#f0f7fb;line-height:27px;text-align:center;">2.57</div><div style="left:889px;top:629px;width:39px;height:25px;background:#efefef;line-height:27px;text-align:center;"><span style="color:#117a11">平</span></div><div style="left:929px;top:629px;width:39px;height:25px;background:#efefef;line-height:27px;text-align:center;"><span style="color:#117a11">走</span></div><div style="left:969px;top:629px;width:59px;height:25px;background:#efefef;line-height:27px;text-align:center;"><span style="color:#2323b0">小</span></div><div style="left:2px;top:655px;width:80px;height:25px;background:#ff3333;line-height:27px;text-align:center;color:#fff;">英超</div><div style="left:83px;top:655px;width:78px;height:25px;background:#fff;line-height:27px;text-align:center;">24-08-17</div><div style="left:162px;top:655px;width:96px;height:25px;background:#fff;line-height:27px;text-align:center;"><span style="color:#222">诺丁汉森林</span></div><div style="left:259px;top:655px;width:93px;height:25px;background:#fff;line-height:27px;text-align:center;"><span style="color:#c41f1f">1-1</span>(1-0)</div><div style="left:353px;top:655px;width:38px;height:25px;background:#fff;line-height:27px;text-align:center;">2-6</div><div style="left:392px;top:655px;width:96px;height:25px;background:#fff;line-height:27px;text-align:center;"><span style="color:#157515">伯恩茅斯</span></div><div style="left:489px;top:655px;width:50px;height:25px;background:#fdfaf6;line-height:27px;text-align:center;">0.92</div><div style="left:540px;top:655px;width:87px;height:25px;background:#fdfaf6;line-height:27px;text-align:center;">平/半</div><div style="left:628px;top:655px;width:53px;height:25px;background:#fdfaf6;line-height:27px;text-align:center;">0.97</div><div style="left:682px;top:655px;width:67px;height:25px;background:#f0f7fb;line-height:27px;text-align:center;">2.28</div><div style="left:750px;top:655px;width:68px;height:25px;background:#f0f7fb;line-height:27px;text-align:center;">3.42</div><div style="left:819px;top:655px;width:69px;height:25px;background:#f0f7fb;line-height:27px;text-align:center;">3.10</div><div style="left:889px;top:655px;width:39px;height:25px;background:#fff;line-height:27px;text-align:center;"><span style="color:#117a11">平</span></div><div style="left:929px;top:655px;width:39px;height:25px;background:#fff;line-height:27px;text-align:center;"><span style="color:#cc2222">赢</span></div><div style="left:969px;top:655px;width:59px;height:25px;background:#fff;line-height:27px;text-align:center;"><span style="color:#2323b0">小</span></div><div style="left:2px;top:681px;width:80px;height:25px;background:#00a8a8;line-height:27px;text-align:center;color:#fff;">球会友谊</div><div style="left:83px;top:681px;width:78px;height:25px;background:#efefef;line-height:27px;text-align:center;">24-08-11</div><div style="left:162px;top:681px;width:96px;height:25px;background:#efefef;line-height:27px;text-align:center;"><span style="color:#157515">伯恩茅斯</span></div><div style="left:259px;top:681px;width:93px;height:25px;background:#efefef;line-height:27px;text-align:center;"><span style="color:#c41f1f">3-2</span>(1-1)</div><div style="left:353px;top:681px;width:38px;height:25px;background:#efefef;line-height:27px;text-align:center;">1-1</div><div style="left:392px;top:681px;width:96px;height:25px;background:#efefef;line-height:27px;text-align:center;"><span style="color:#222">赫罗纳</span></div><div style="left:489px;top:681px;width:50px;height:25px;background:#fdfaf6;line-height:27px;text-align:center;">0.90</div><div style="left:540px;top:681px;width:87px;height:25px;background:#fdfaf6;line-height:27px;text-align:center;">一/球半</div><div style="left:628px;top:681px;width:53px;height:25px;background:#fdfaf6;line-height:27px;text-align:center;">0.92</div><div style="left:682px;top:681px;width:67px;height:25px;background:#f0f7fb;line-height:27px;text-align:center;">1.51</div><div style="left:750px;top:681px;width:68px;height:25px;background:#f0f7fb;line-height:27px;text-align:center;">4.38</div><div style="left:819px;top:681px;width:69px;height:25px;background:#f0f7fb;line-height:27px;text-align:center;">5.16</div><div style="left:889px;top:681px;width:39px;height:25px;background:#efefef;line-height:27px;text-align:center;"><span style="color:#dd2222">胜</span></div><div style="left:929px;top:681px;width:39px;height:25px;background:#efefef;line-height:27px;text-align:center;"><span style="color:#1a1ac8">输</span></div><div style="left:969px;top:681px;width:59px;height:25px;background:#efefef;line-height:27px;text-align:center;"><span style="color:#dd2222">大</span></div><div style="left:2px;top:707px;width:1026px;height:25px;background:#fff;line-height:27px;text-align:center;letter-spacing:0.24px;">近<span style="color:#c41f1f">10</span>场,胜4平2负4, 胜率:<span style="color:#c41f1f">40%</span> 让胜率:<span style="color:#c41f1f">40%</span> 大率:<span style="color:#c41f1f">30%</span> 单率:<span style="color:#c41f1f">60%</span></div><div class="t" style="left:386px;top:387px;">近</div><div class="sel m" style="left:401px;top:388px;width:36px;height:15px;line-height:15px"><span class="st mono">10</span><svg class="chev" width="10" height="7" viewBox="0 0 10 7"><path d="M1 1 L5 5 L9 1" fill="none" stroke="#111" stroke-width="2"/></svg></div><div class="t" style="left:444px;top:387px;">场</div><div class="cb" style="left:459px;top:388px"></div><div class="t" style="left:476px;top:387px;">同客</div><div class="cb on" style="left:504px;top:388px"><svg width="13" height="13" viewBox="0 0 13 13"><path d="M2.4 6.9 L5.4 9.5 L10.5 3.2" fill="none" stroke="#fff" stroke-width="2.2"/></svg></div><div class="t" style="left:517px;top:387px;">英超</div><div class="cb on" style="left:541px;top:388px"><svg width="13" height="13" viewBox="0 0 13 13"><path d="M2.4 6.9 L5.4 9.5 L10.5 3.2" fill="none" stroke="#fff" stroke-width="2.2"/></svg></div><div class="t" style="left:554px;top:387px;">英联杯</div><div class="cb on" style="left:590px;top:388px"><svg width="13" height="13" viewBox="0 0 13 13"><path d="M2.4 6.9 L5.4 9.5 L10.5 3.2" fill="none" stroke="#fff" stroke-width="2.2"/></svg></div><div class="t" style="left:603px;top:387px;">球会友谊</div><div class="cb on" style="left:651px;top:388px"><svg width="13" height="13" viewBox="0 0 13 13"><path d="M2.4 6.9 L5.4 9.5 L10.5 3.2" fill="none" stroke="#fff" stroke-width="2.2"/></svg></div><div class="t" style="left:664px;top:387px;">英足总杯</div><div class="sel" style="left:525px;top:408px;width:59px;height:17px;line-height:17px"><span class="st">Crow*</span><svg class="chev" width="10" height="7" viewBox="0 0 10 7"><path d="M1 1 L5 5 L9 1" fill="none" stroke="#111" stroke-width="2"/></svg></div><div class="sel" style="left:593px;top:408px;width:49px;height:17px;line-height:17px"><span class="st">终指</span><svg class="chev" width="10" height="7" viewBox="0 0 10 7"><path d="M1 1 L5 5 L9 1" fill="none" stroke="#111" stroke-width="2"/></svg></div><div class="sel" style="left:721px;top:408px;width:67px;height:17px;line-height:17px"><span class="st">平均值</span><svg class="chev" width="10" height="7" viewBox="0 0 10 7"><path d="M1 1 L5 5 L9 1" fill="none" stroke="#111" stroke-width="2"/></svg></div><div class="sel" style="left:798px;top:408px;width:49px;height:17px;line-height:17px"><span class="st">终指</span><svg class="chev" width="10" height="7" viewBox="0 0 10 7"><path d="M1 1 L5 5 L9 1" fill="none" stroke="#111" stroke-width="2"/></svg></div><div class="sel" style="left:933px;top:408px;width:49px;height:17px;line-height:17px"><span class="st">全场</span><svg class="chev" width="10" height="7" viewBox="0 0 10 7"><path d="M1 1 L5 5 L9 1" fill="none" stroke="#111" stroke-width="2"/></svg></div></body></html>
